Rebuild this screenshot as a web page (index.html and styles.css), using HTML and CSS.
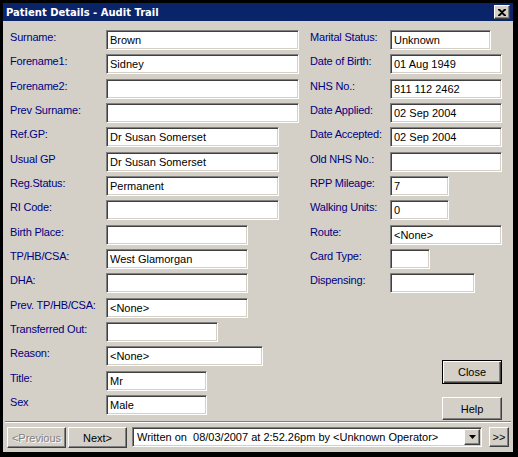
FILE: index.html
```
<!DOCTYPE html>
<html lang="en">
<head>
    <meta charset="UTF-8">
    <title>Patient Details - Audit Trail</title>
    <link rel="stylesheet" href="styles.css">
</head>
<body>
    <main class="window">
        <header class="titlebar">
            <span class="title">Patient Details - Audit Trail</span>
            <button class="title-close">
                <svg width="8" height="7" viewBox="0 0 8 7"><path d="M0 0h2l2 2 2-2h2v1L5 3.5 8 6v1H6L4 5 2 7H0V6l3-2.5L0 1z" fill="#000"/></svg>
            </button>
        </header>

        <section class="form">
            <div class="col left">
                <div class="row"><label>Surname:</label><div class="box w193">Brown</div></div>
                <div class="row"><label>Forename1:</label><div class="box w193">Sidney</div></div>
                <div class="row"><label>Forename2:</label><div class="box w193"></div></div>
                <div class="row"><label>Prev Surname:</label><div class="box w193"></div></div>
                <div class="row"><label>Ref.GP:</label><div class="box w173">Dr Susan Somerset</div></div>
                <div class="row"><label>Usual GP</label><div class="box w173">Dr Susan Somerset</div></div>
                <div class="row"><label>Reg.Status:</label><div class="box w173">Permanent</div></div>
                <div class="row"><label>RI Code:</label><div class="box w173"></div></div>
                <div class="row"><label>Birth Place:</label><div class="box w142"></div></div>
                <div class="row"><label>TP/HB/CSA:</label><div class="box w142">West Glamorgan</div></div>
                <div class="row"><label>DHA:</label><div class="box w142"></div></div>
                <div class="row"><label>Prev. TP/HB/CSA:</label><div class="box w142">&lt;None&gt;</div></div>
                <div class="row"><label>Transferred Out:</label><div class="box w112"></div></div>
                <div class="row"><label>Reason:</label><div class="box w157">&lt;None&gt;</div></div>
                <div class="row"><label>Title:</label><div class="box w101">Mr</div></div>
                <div class="row"><label>Sex</label><div class="box w101">Male</div></div>
            </div>

            <div class="col right">
                <div class="row"><label>Marital Status:</label><div class="box w101">Unknown</div></div>
                <div class="row"><label>Date of Birth:</label><div class="box w112">01 Aug 1949</div></div>
                <div class="row"><label>NHS No.:</label><div class="box w112">811 112 2462</div></div>
                <div class="row"><label>Date Applied:</label><div class="box w112">02 Sep 2004</div></div>
                <div class="row"><label>Date Accepted:</label><div class="box w112">02 Sep 2004</div></div>
                <div class="row"><label>Old NHS No.:</label><div class="box w112"></div></div>
                <div class="row"><label>RPP Mileage:</label><div class="box w59">7</div></div>
                <div class="row"><label>Walking Units:</label><div class="box w59">0</div></div>
                <div class="row"><label>Route:</label><div class="box w112">&lt;None&gt;</div></div>
                <div class="row"><label>Card Type:</label><div class="box w40"></div></div>
                <div class="row"><label>Dispensing:</label><div class="box w85"></div></div>

                <div class="actions">
                    <button class="btn default">Close</button>
                    <button class="btn">Help</button>
                </div>
            </div>
        </section>

        <div class="sep"></div>

        <footer class="navbar">
            <button class="btn nav" disabled>&lt;Previous</button>
            <button class="btn nav">Next&gt;</button>
            <div class="combo">
                <span class="combo-text">Written on  08/03/2007 at 2:52.26pm by &lt;Unknown Operator&gt;</span>
                <span class="combo-arrow">
                    <svg width="7" height="4" viewBox="0 0 7 4"><path d="M0 0h7L3.5 4z" fill="#000"/></svg>
                </span>
            </div>
            <button class="btn more">&gt;&gt;</button>
        </footer>
    </main>
</body>
</html>
```

FILE: styles.css
```
* {
    box-sizing: border-box;
}

body {
    margin: 0;
    background: #000;
    font-family: "Liberation Sans", Arial, sans-serif;
    font-size: 11px;
}

.window {
    width: 518px;
    height: 457px;
    background: #d4d0c8;
    border-style: solid;
    border-color: #000;
    border-width: 3px 5px 5px 3px;
    display: flex;
    flex-direction: column;
}

.titlebar {
    height: 18px;
    flex: none;
    background: #0a246a;
    display: flex;
    align-items: center;
    justify-content: space-between;
    padding: 0 3px 0 3px;
}

.title {
    color: #fff;
    font-family: "DejaVu Sans", sans-serif;
    font-weight: bold;
    font-size: 10px;
}

.title-close {
    width: 16px;
    height: 14px;
    padding: 0;
    background: #d4d0c8;
    border: 1px solid;
    border-color: #fff #404040 #404040 #fff;
    box-shadow: inset -1px -1px #808080;
    display: flex;
    align-items: center;
    justify-content: center;
}

.form {
    height: 400px;
    flex: none;
    display: flex;
    padding: 9px 11px 1px 7px;
}

.col {
    display: flex;
    flex-direction: column;
}

.left {
    width: 300px;
}

.right {
    flex: 1;
}

.row {
    height: 24.33px;
    flex: none;
    display: flex;
    align-items: flex-start;
}

label {
    color: #000080;
    line-height: 13px;
    padding-top: 1px;
    letter-spacing: -0.2px;
    white-space: nowrap;
}

.left label {
    width: 96px;
}

.right label {
    width: 80px;
}

.box {
    height: 20px;
    background: #fff;
    border: 1px solid;
    border-color: #808080 #fff #fff #808080;
    box-shadow: inset 1px 1px #404040, inset -1px -1px #d4d0c8;
    padding: 3px 3px 0 3px;
    line-height: 13px;
    color: #000;
    white-space: nowrap;
    overflow: hidden;
}

.w193 { width: 193px; }
.w173 { width: 173px; }
.w157 { width: 157px; }
.w142 { width: 142px; }
.w112 { width: 112px; }
.w101 { width: 101px; }
.w85 { width: 85px; }
.w59 { width: 59px; }
.w40 { width: 40px; }

.actions {
    margin-top: auto;
    display: flex;
    flex-direction: column;
    align-items: flex-end;
    gap: 13px;
}

.btn {
    width: 60px;
    height: 23px;
    padding: 0;
    background: #d4d0c8;
    border: 1px solid;
    border-color: #fff #404040 #404040 #fff;
    box-shadow: inset -1px -1px #808080;
    font-family: "Liberation Sans", Arial, sans-serif;
    font-size: 11px;
    color: #000;
}

.btn.default {
    height: 24px;
    border-color: #000;
    box-shadow: inset 1px 1px #fff, inset -1px -1px #404040, inset -2px -2px #808080;
}

.sep {
    height: 2px;
    flex: none;
    margin: 0 2px;
    border-top: 1px solid #808080;
    border-bottom: 1px solid #fff;
}

.navbar {
    flex: 1;
    display: flex;
    align-items: flex-start;
    padding: 4px 4px 0 4px;
}

.btn.nav {
    width: 59px;
    height: 21px;
    margin-right: 2px;
}

.btn.nav:disabled {
    color: #808080;
    text-shadow: 1px 1px #fff;
}

.combo {
    width: 350px;
    height: 20px;
    margin-left: 3px;
    background: #fff;
    border: 1px solid;
    border-color: #808080 #fff #fff #808080;
    box-shadow: inset 1px 1px #404040, inset -1px -1px #d4d0c8;
    display: flex;
    align-items: flex-start;
    padding: 1px;
}

.combo-text {
    flex: 1;
    padding: 2px 0 0 3px;
    line-height: 13px;
    white-space: pre;
    overflow: hidden;
}

.combo-arrow {
    width: 16px;
    height: 16px;
    background: #d4d0c8;
    border: 1px solid;
    border-color: #fff #404040 #404040 #fff;
    box-shadow: inset -1px -1px #808080;
    display: flex;
    align-items: center;
    justify-content: center;
}

.btn.more {
    width: 20px;
    height: 20px;
    margin-left: 7px;
}
```
